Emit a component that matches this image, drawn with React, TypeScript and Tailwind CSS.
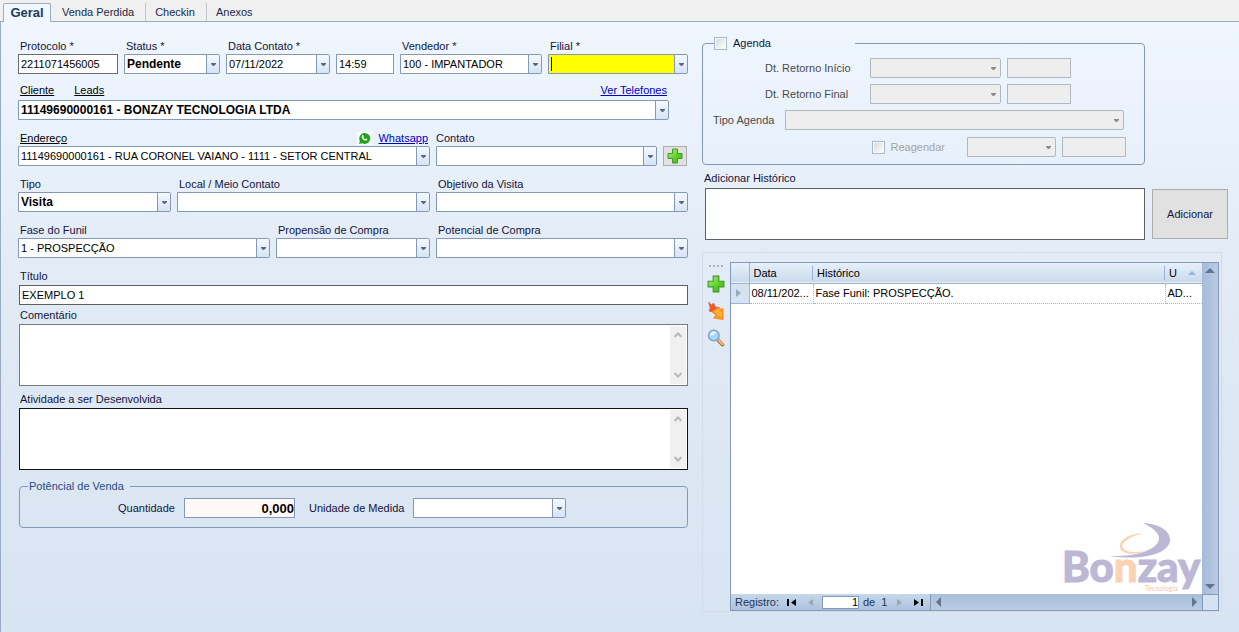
import type { ReactNode } from 'react';

const tabs = ['Venda Perdida', 'Checkin', 'Anexos'];

type ComboProps = {
    id: string;
    value?: string;
    label?: string;
    bold?: boolean;
    disabled?: boolean;
    highlight?: boolean;
};

function Combo({ id, value = '', label, bold, disabled, highlight }: ComboProps) {
    let box = 'border-[#8499b8] bg-white text-black';
    if (disabled) box = 'border-[#b0b8c1] bg-[#eeeeee] text-gray-500';
    if (highlight) box = 'border-[#8499b8] bg-[#ffff00] text-black';

    return (
        <div className={`relative h-5 w-full min-w-0 overflow-hidden rounded-r-xs border ${box}`}>
            <select
                id={id}
                aria-label={label}
                disabled={disabled}
                defaultValue={value}
                className={`block h-full w-full appearance-none bg-transparent pl-0.5 pr-4 outline-none ${bold ? 'text-[12px] font-bold' : 'text-[11px]'}`}
            >
                <option value={value}>{value}</option>
            </select>
            {highlight && <span className="pointer-events-none absolute left-0.5 top-0.5 h-3.5 w-px bg-black" />}
            <span
                className={`pointer-events-none absolute inset-y-0 right-0 flex w-[13px] items-center justify-center ${disabled ? '' : 'border-l border-[#8499b8] bg-linear-to-b from-[#f4f9ff] to-[#d5e4f6]'}`}
            >
                <svg width="5" height="3" viewBox="0 0 5 3" className={disabled ? 'text-[#8a8a8a]' : 'text-[#5d6a7b]'}>
                    <path d="M0 0h5v1L3 3H2L0 1z" fill="currentColor" />
                </svg>
            </span>
        </div>
    );
}

function TextBox({ id, value = '', label, disabled, className = 'border-[#8499b8]' }: { id: string; value?: string; label?: string; disabled?: boolean; className?: string }) {
    return (
        <input
            id={id}
            type="text"
            aria-label={label}
            defaultValue={value}
            disabled={disabled}
            className={`block h-5 w-full min-w-0 border px-0.5 text-[11px] outline-none ${disabled ? 'border-[#b0b8c1] bg-[#eeeeee]' : 'bg-white text-black'} ${className}`}
        />
    );
}

function Field({ id, label, children }: { id: string; label: string; children: ReactNode }) {
    return (
        <div className="min-w-0">
            <label htmlFor={id} className="block truncate pl-0.5">{label}</label>
            {children}
        </div>
    );
}

function MemoBox({ id, border }: { id: string; border: string }) {
    return (
        <div className={`mt-px flex h-[62px] border bg-white p-px ${border}`}>
            <textarea id={id} className="min-w-0 flex-1 resize-none overflow-hidden bg-white px-0.5 text-black outline-none" />
            <div className="flex w-4 flex-col items-center justify-between bg-[#f0f0f0] py-1.5">
                <svg width="8" height="6" viewBox="0 0 8 6" fill="none" stroke="#b9b9b9" strokeWidth="2">
                    <path d="M.5 5 4 1.5 7.5 5" />
                </svg>
                <svg width="8" height="6" viewBox="0 0 8 6" fill="none" stroke="#b9b9b9" strokeWidth="2">
                    <path d="M.5 1 4 4.5 7.5 1" />
                </svg>
            </div>
        </div>
    );
}

function PlusIcon({ size }: { size: number }) {
    return (
        <svg width={size} height={size} viewBox="0 0 16 16">
            <defs>
                <linearGradient id="plus" x1="0" y1="0" x2="1" y2="1">
                    <stop offset="0" stopColor="#b4f08c" />
                    <stop offset="0.5" stopColor="#66d32f" />
                    <stop offset="1" stopColor="#3cab1c" />
                </linearGradient>
            </defs>
            <path d="M5.5 1h5v4.5H15v5h-4.500V15h-5v-4.500H1v-5h4.500z" fill="url(#plus)" stroke="#3a9a25" />
        </svg>
    );
}

function EditIcon() {
    return (
        <svg width="18" height="20" viewBox="0 0 18 20">
            <path d="M1.500 1l3 3L6.500 2l2 4 3 .5.500 4L8 13l-2.500-2L2 10l1.200-3z" fill="#f0572b" stroke="#d8481f" strokeWidth=".5" />
            <path d="M7 9l5-3 2 2.500 2-1v11l-9.500-1.500L9 14l-4-3.500z" fill="#ff9a1f" stroke="#ec7a12" strokeWidth=".7" />
            <path d="M8 10l3.500-2.500L13 11l2-.5v5l-4-1z" fill="#ffb13c" />
        </svg>
    );
}

function SearchIcon() {
    return (
        <svg width="18" height="18" viewBox="0 0 18 18">
            <path d="M10.500 10.500l5 5.200" stroke="#b57430" strokeWidth="3.600" strokeLinecap="round" />
            <path d="M11 10.500l4.500 4.700" stroke="#f3b877" strokeWidth="2" strokeLinecap="round" />
            <circle cx="6.800" cy="6.500" r="5.300" fill="#a5daf7" stroke="#83a5c4" strokeWidth="1.500" />
            <path d="M3 6a4 4 0 0 1 6-3C8 6 6 7 3 6z" fill="#e4f6ff" />
        </svg>
    );
}

function WhatsappIcon() {
    return (
        <svg width="15" height="13" viewBox="0 0 15 13">
            <path fill="#fff" d="M0 0h15v13H0z" />
            <path d="M2 12l.9-3A5.500 5.500 0 1 1 5.200 11.300z" fill="#1fa51c" />
            <path d="M5.300 3.200c.6-.5 1-.1 1.400 1.100l-.5.8c.5 1 1.100 1.600 2.100 2l.8-.6c1.300.5 1.500.9 1 1.500-1.200 1.200-3 .4-4.200-.8-1.100-1.200-1.800-2.900-.6-4z" fill="#fff" />
        </svg>
    );
}

function BonzayLogo() {
    return (
        <svg width="140" height="72" viewBox="0 0 140 72" role="img" aria-label="Bonzay Tecnologia" className="pointer-events-none absolute bottom-0 right-0">
            <text x="0" y="60" fontFamily="Lato, sans-serif" fontWeight="900" fontSize="42" fill="#bcb7d5" stroke="#bcb7d5">
                Bo<tspan fill="#fad3b3" stroke="#fad3b3">n</tspan>zay
            </text>
            <path d="M81 1c18 1 28 9 27 18-2 12-24 20-61 15 24 1 47-5 50-16C98 12 92 6 81 1z" fill="#bcb7d5" />
            <path d="M82 11C68 14 58 21 61 26c2 4 12 5 22 3-12 5-24 3-25-4C57 17 70 11 82 11z" fill="#fad3b3" />
            <text x="83" y="69" fontFamily="Lato, sans-serif" fontSize="7" fill="#f8c8a4">Tecnologia</text>
        </svg>
    );
}

function Arrow({ dir, color = '#5f7592' }: { dir: 'up' | 'down' | 'left' | 'right'; color?: string }) {
    const paths = {
        up: 'M0 7l5-5 5 5z',
        down: 'M0 3l5 5 5-5z',
        left: 'M7 0L2 5l5 5z',
        right: 'M3 0l5 5-5 5z',
    };
    return (
        <svg width="10" height="10" viewBox="0 0 10 10">
            <path d={paths[dir]} fill={color} />
        </svg>
    );
}

function TabBar() {
    return (
        <nav className="flex h-[21px] items-end bg-[#f0f0f0] pl-[3px] pt-[3px] text-[#1b2a4a]">
            <button type="button" className="relative top-px mr-0.5 h-[19px] w-12 rounded-t-xs border border-b-0 border-[#9aacc4] bg-[#f1f7fe] text-[13px] leading-4 font-bold text-[#1f3a58]">
                Geral
            </button>
            {tabs.map((tab) => (
                <button key={tab} type="button" className="h-[18px] border-r border-[#c3c7cd] pl-[9px] pr-[11px] text-[11px] last:border-r-0">
                    {tab}
                </button>
            ))}
        </nav>
    );
}

function ContactForm() {
    return (
        <form className="min-w-0">
            <div className="space-y-2.5">
                <div className="grid grid-cols-[100fr_96fr_104fr_58fr_142fr_140fr] gap-1.5">
                    <Field id="protocolo" label="Protocolo *">
                        <TextBox id="protocolo" value="2211071456005" className="border-[#6b6b6b]" />
                    </Field>
                    <Field id="status" label="Status *">
                        <Combo id="status" value="Pendente" bold />
                    </Field>
                    <Field id="data" label="Data Contato *">
                        <Combo id="data" value="07/11/2022" />
                    </Field>
                    <div className="min-w-0 pt-4">
                        <TextBox id="hora" label="Hora" value="14:59" />
                    </div>
                    <Field id="vendedor" label="Vendedor *">
                        <Combo id="vendedor" value="100 - IMPANTADOR" />
                    </Field>
                    <Field id="filial" label="Filial *">
                        <Combo id="filial" highlight />
                    </Field>
                </div>

                <div className="pr-[19px]">
                    <div className="-mt-0.5 mb-0.5 flex gap-5 px-0.5">
                        <a href="#cliente" className="text-black underline">Cliente</a>
                        <a href="#leads" className="text-black underline">Leads</a>
                        <a href="#telefones" className="ml-auto text-[#0000c8] underline">Ver Telefones</a>
                    </div>
                    <Combo id="cliente" label="Cliente" value="11149690000161 - BONZAY TECNOLOGIA LTDA" bold />
                </div>

                <div className="grid grid-cols-[412fr_221fr_24px] gap-1.5 pr-px">
                    <div className="min-w-0">
                        <div className="flex items-center px-0.5">
                            <a href="#endereco" className="text-black underline">Endereço</a>
                            <span className="ml-auto mr-1.5"><WhatsappIcon /></span>
                            <a href="#whatsapp" className="text-[#0000c8] underline">Whatsapp</a>
                        </div>
                        <Combo id="endereco" label="Endereço" value="11149690000161 - RUA CORONEL VAIANO - 1111 - SETOR CENTRAL" />
                    </div>
                    <div className="min-w-0">
                        <label htmlFor="contato" className="block">Contato</label>
                        <Combo id="contato" />
                    </div>
                    <button type="button" aria-label="Adicionar contato" className="mt-4 flex h-5 items-center justify-center border border-[#adadad] bg-[#e1e1e1]">
                        <PlusIcon size={16} />
                    </button>
                </div>

                <div className="grid grid-cols-[153fr_253fr_252fr] gap-1.5">
                    <Field id="tipo" label="Tipo">
                        <Combo id="tipo" value="Visita" bold />
                    </Field>
                    <Field id="local" label="Local / Meio Contato">
                        <Combo id="local" />
                    </Field>
                    <Field id="objetivo" label="Objetivo da Visita">
                        <Combo id="objetivo" />
                    </Field>
                </div>

                <div className="grid grid-cols-[252fr_154fr_252fr] gap-1.5">
                    <Field id="fase" label="Fase do Funil">
                        <Combo id="fase" value="1 - PROSPECÇÃO" />
                    </Field>
                    <Field id="propensao" label="Propensão de Compra">
                        <Combo id="propensao" />
                    </Field>
                    <Field id="potencial" label="Potencial de Compra">
                        <Combo id="potencial" />
                    </Field>
                </div>
            </div>

            <div className="pl-px">
                <label htmlFor="titulo" className="mt-2.5 mb-px block pl-px">Título</label>
                <TextBox id="titulo" value="EXEMPLO 1" className="border-[#5f5f5f]" />
                <label htmlFor="comentario" className="mt-0.5 block pl-px">Comentário</label>
                <MemoBox id="comentario" border="border-[#7a7a7a]" />
                <label htmlFor="atividade" className="mt-[5px] block pl-px">Atividade a ser Desenvolvida</label>
                <MemoBox id="atividade" border="border-[#111111]" />

                <fieldset className="mt-2 rounded-[4px] border border-[#8499b8] px-2 pb-[9px]">
                    <legend className="pl-px pr-1.5 text-[#274b85]">Potêncial de Venda</legend>
                    <div className="flex items-center pl-[90px] pt-1">
                        <label htmlFor="quantidade" className="w-[66px]">Quantidade</label>
                        <input id="quantidade" defaultValue="0,000" className="h-5 w-[111px] border border-[#8499b8] bg-[#fff8f8] text-right text-[13px] font-bold text-black outline-none" />
                        <label htmlFor="unidade" className="ml-3.5 w-[104px]">Unidade de Medida</label>
                        <div className="w-[153px]">
                            <Combo id="unidade" />
                        </div>
                    </div>
                </fieldset>
            </div>
        </form>
    );
}

const checkbox = 'size-[13px] shrink-0 appearance-none border border-[#a9b9cc] bg-linear-to-br from-[#d5d9dd] to-white shadow-[inset_0_0_0_1px_#f7f9fb] checked:bg-blue-300';

function Agenda() {
    return (
        <fieldset className="min-w-0 rounded-[4px] border border-[#8499b8] pb-[7px] pl-2.5 pr-[18px] text-[#4b4b4b]">
            <legend className="ml-px w-[141px]">
                <label className="flex items-center gap-1.5 text-[#14143c]">
                    <input type="checkbox" className={checkbox} />
                    Agenda
                </label>
            </legend>
            <div className="space-y-1.5 pt-[7px]">
                <div className="flex items-center gap-1.5">
                    <label htmlFor="retorno-inicio" className="w-[151px] shrink-0 pl-[52px]">Dt. Retorno Início</label>
                    <div className="w-[131px]"><Combo id="retorno-inicio" disabled /></div>
                    <div className="w-16"><TextBox id="hora-inicio" label="Hora início" disabled className="" /></div>
                </div>
                <div className="flex items-center gap-1.5">
                    <label htmlFor="retorno-final" className="w-[151px] shrink-0 pl-[52px]">Dt. Retorno Final</label>
                    <div className="w-[131px]"><Combo id="retorno-final" disabled /></div>
                    <div className="w-16"><TextBox id="hora-final" label="Hora final" disabled className="" /></div>
                </div>
                <div className="flex items-center pr-0.5">
                    <label htmlFor="tipo-agenda" className="w-[72px] shrink-0">Tipo Agenda</label>
                    <Combo id="tipo-agenda" disabled />
                </div>
                <div className="flex items-center justify-end gap-1.5 pt-px">
                    <label className="mr-4 flex items-center gap-1.5 text-[#a5a5a0]">
                        <input type="checkbox" disabled className={checkbox} />
                        Reagendar
                    </label>
                    <div className="w-[89px]"><Combo id="reagendar-data" label="Data" disabled /></div>
                    <div className="w-16"><TextBox id="reagendar-hora" label="Hora" disabled className="" /></div>
                </div>
            </div>
        </fieldset>
    );
}

function HistoryGrid() {
    return (
        <section className="mr-1.5 mt-3 flex flex-1 border border-[#d3dce8]">
            <div className="flex w-[27px] flex-col items-center pr-0.5 pt-3">
                <div className="flex gap-0.5">
                    {[0, 1, 2, 3].map((dot) => <span key={dot} className="size-0.5 bg-[#a7b3c3]" />)}
                </div>
                <button type="button" aria-label="Adicionar" className="mt-2"><PlusIcon size={18} /></button>
                <button type="button" aria-label="Editar" className="mt-2"><EditIcon /></button>
                <button type="button" aria-label="Pesquisar" className="mt-2"><SearchIcon /></button>
            </div>

            <div className="mr-0.5 mt-[9px] flex min-w-0 flex-1 flex-col border border-[#8499b8] bg-white">
                <div className="flex flex-1">
                    <div className="relative min-w-0 flex-1">
                        <table className="w-full table-fixed border-collapse text-left text-black">
                            <colgroup>
                                <col className="w-[18px]" />
                                <col className="w-16" />
                                <col />
                                <col className="w-[37px]" />
                            </colgroup>
                            <thead>
                                <tr className="h-5 border-b border-[#9fb3cd] bg-linear-to-b from-[#e6f0fa] to-[#c9daec]">
                                    <th className="border-r border-[#9fb3cd]" />
                                    <th className="p-0 pl-1 font-normal">
                                        <span className="block border-r border-[#9fb3cd] leading-[14px]">Data</span>
                                    </th>
                                    <th className="p-0 pl-1 font-normal">
                                        <span className="block border-r border-[#9fb3cd] leading-[14px]">Histórico</span>
                                    </th>
                                    <th className="p-0 pl-1 font-normal">
                                        <span className="flex items-center justify-between pr-1.5">
                                            U
                                            <svg width="8" height="4" viewBox="0 0 8 4"><path d="M0 4l4-4 4 4z" fill="#8fb4ea" /></svg>
                                        </span>
                                    </th>
                                </tr>
                            </thead>
                            <tbody>
                                <tr className="h-5">
                                    <td className="border-b border-r border-[#9fb3cd] bg-[#d5e2f1] p-0 pl-1">
                                        <svg width="6" height="8" viewBox="0 0 6 8"><path d="M1 0l5 4-5 4z" fill="#9aaabd" /></svg>
                                    </td>
                                    <td className="whitespace-nowrap border-b border-r border-dotted border-[#a3b5c9] p-0 pl-0.5">08/11/202...</td>
                                    <td className="truncate border-b border-r border-dotted border-[#a3b5c9] p-0 pl-0.5">Fase Funil: PROSPECÇÃO.</td>
                                    <td className="whitespace-nowrap border-b border-dotted border-[#a3b5c9] p-0 pl-0.5">AD...</td>
                                </tr>
                            </tbody>
                        </table>
                        <BonzayLogo />
                    </div>
                    <div className="flex w-4 flex-col items-center justify-between bg-linear-to-r from-[#a5bbd7] to-[#b9cce3] py-[3px]">
                        <Arrow dir="up" />
                        <Arrow dir="down" />
                    </div>
                </div>

                <div className="flex h-4 bg-linear-to-b from-[#a9bfda] to-[#b9cce3] text-[#1f3550]">
                    <div className="flex w-[200px] shrink-0 items-center border-r border-[#8499b8] bg-linear-to-b from-[#c6d7ea] to-[#adc3de] pl-1">
                        <span className="w-[52px]">Registro:</span>
                        <button type="button" aria-label="Primeiro" className="flex items-center">
                            <svg width="9" height="7" viewBox="0 0 9 7"><path d="M0 0h2v7H0zM9 0v7L4 3.500z" fill="#000" /></svg>
                        </button>
                        <button type="button" aria-label="Anterior" className="ml-3 mr-[9px]">
                            <svg width="5" height="7" viewBox="0 0 5 7"><path d="M5 0v7L0 3.500z" fill="#9ca9ab" /></svg>
                        </button>
                        <input aria-label="Registro" defaultValue="1" className="h-[13px] w-[37px] border border-[#8499b8] bg-white text-right text-[11px] text-black outline-none" />
                        <span className="ml-1 mr-2.5 whitespace-pre">de  1</span>
                        <button type="button" aria-label="Próximo">
                            <svg width="5" height="7" viewBox="0 0 5 7"><path d="M0 0v7l5-3.500z" fill="#9ca9ab" /></svg>
                        </button>
                        <button type="button" aria-label="Último" className="ml-3">
                            <svg width="9" height="7" viewBox="0 0 9 7"><path d="M7 0h2v7H7zM0 0v7l5-3.500z" fill="#000" /></svg>
                        </button>
                    </div>
                    <div className="flex flex-1 items-center justify-between px-[3px]">
                        <Arrow dir="left" />
                        <Arrow dir="right" />
                    </div>
                    <div className="w-4 border-l border-t border-[#8499b8] bg-[#d5e2f1]" />
                </div>
            </div>
        </section>
    );
}

export default function App() {
    return (
        <div className="flex min-h-screen flex-col font-['Liberation_Sans',Arial,sans-serif] text-[11px] leading-4 text-[#14143c]">
            <TabBar />
            <main className="grid flex-1 grid-cols-[minmax(0,670fr)_minmax(0,526fr)] gap-3.5 border-l border-t border-[#9aacc4] bg-linear-to-b from-[#eff6fe] via-[#e1eaf5] via-45% to-[#d7e4f2] pb-5 pl-[17px] pr-[11px] pt-4">
                <ContactForm />
                <div className="-mt-[3px] flex min-w-0 flex-col">
                    <div className="grid grid-cols-[minmax(0,1fr)_76px] gap-x-[7px]">
                        <Agenda />
                        <label htmlFor="historico" className="col-span-2 mb-0.5 mt-[5px] block pl-0.5">Adicionar Histórico</label>
                        <div className="pl-[3px]">
                            <textarea id="historico" className="block h-[52px] w-full resize-none border border-[#5f5f5f] bg-white px-0.5 text-black outline-none" />
                        </div>
                        <button type="button" className="my-px border border-[#adadad] bg-[#e1e1e1]">Adicionar</button>
                    </div>
                    <HistoryGrid />
                </div>
            </main>
        </div>
    );
}
